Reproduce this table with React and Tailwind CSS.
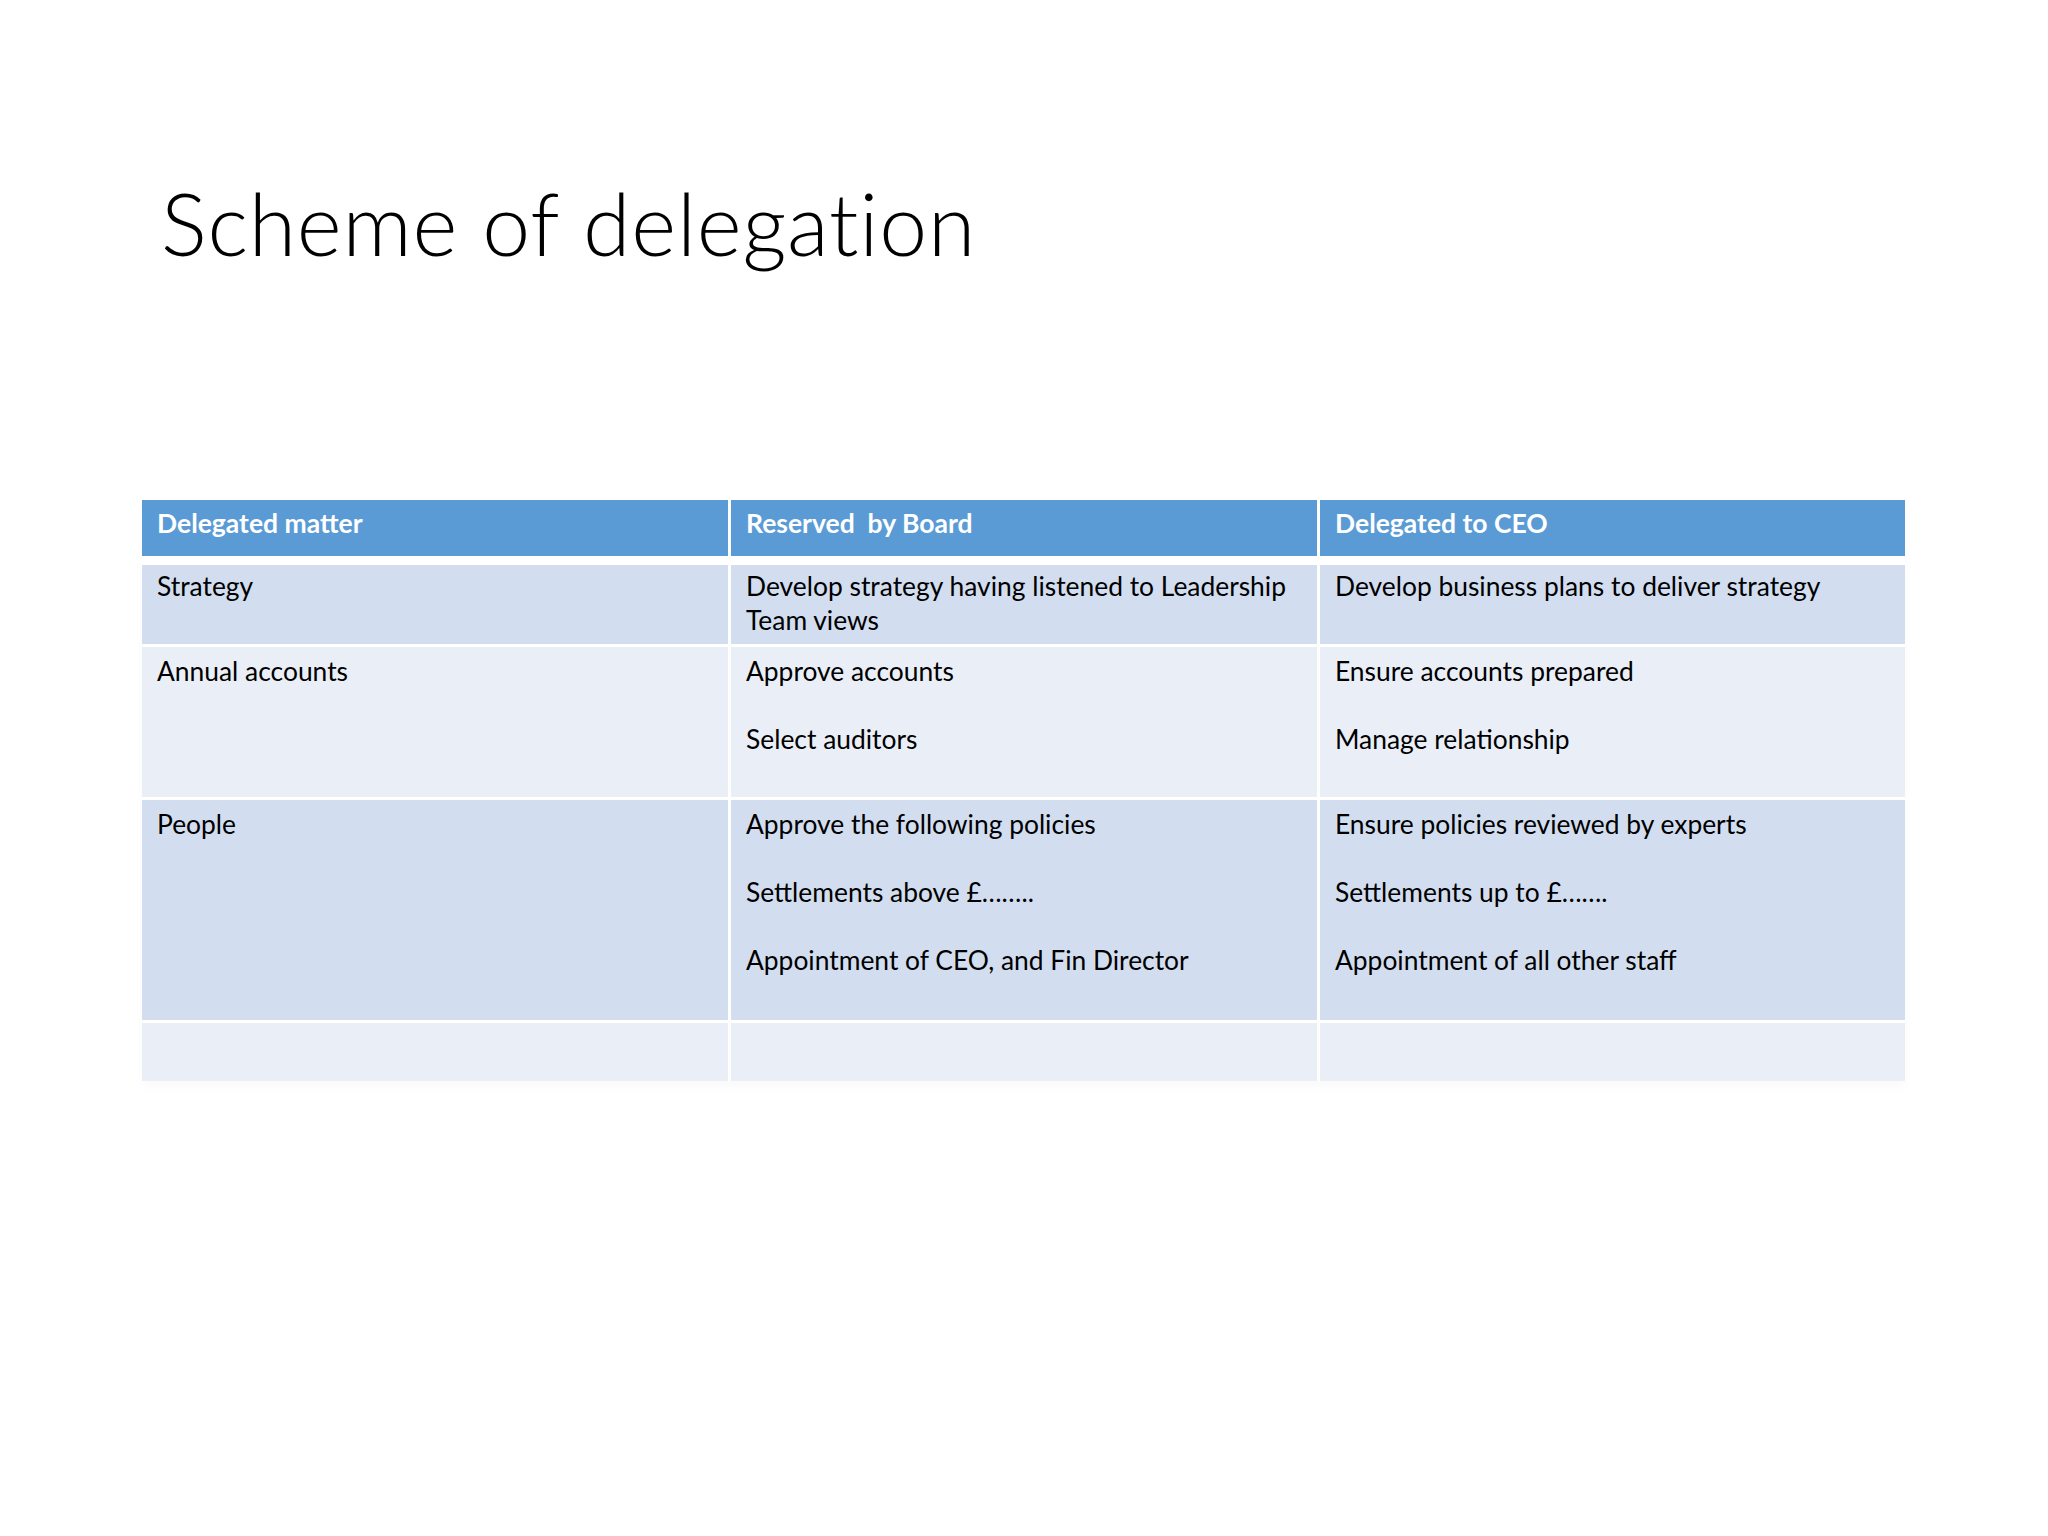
import React from "react";

const font = { fontFamily: "Lato, 'Open Sans', sans-serif" };

function Cell({ items, className = "" }) {
  return (
    <div className={`pl-[15px] pr-[10px] ${className}`}>
      {items.map((t, i) => (
        <div key={i} className={i > 0 ? "mt-[34px]" : ""}>
          {t}
        </div>
      ))}
    </div>
  );
}

export default function App() {
  const rows = [
    {
      h: "h-[79px]",
      pt: "pt-[4px]",
      bg: "bg-[#D2DEEF]",
      cells: [
        ["Strategy"],
        ["Develop strategy having listened to Leadership Team views"],
        ["Develop business plans to deliver strategy"],
      ],
    },
    {
      h: "h-[150px]",
      pt: "pt-[7px]",
      bg: "bg-[#EAEFF7]",
      cells: [
        ["Annual accounts"],
        ["Approve accounts", "Select auditors"],
        ["Ensure accounts prepared", "Manage relationship"],
      ],
    },
    {
      h: "h-[220px]",
      pt: "pt-[7px]",
      bg: "bg-[#D2DEEF]",
      cells: [
        ["People"],
        [
          "Approve the following policies",
          "Settlements above £……..",
          "Appointment of CEO, and Fin Director",
        ],
        [
          "Ensure policies reviewed by experts",
          "Settlements up to £…….",
          "Appointment of all other staff",
        ],
      ],
    },
    {
      h: "h-[58px]",
      pt: "pt-[7px]",
      bg: "bg-[#EAEEF7]",
      cells: [[""], [""], [""]],
    },
  ];

  return (
    <div className="w-[2048px] h-[1536px] bg-white overflow-hidden" style={font}>
      <div className="pl-[161px] pt-[175px]">
        <h1 className="text-[86px] leading-[96px] font-light text-black tracking-[0.8px]">
          Scheme of delegation
        </h1>
      </div>
      <div className="ml-[142px] mt-[229px] w-[1763px] flex flex-col shadow-[0_6px_10px_rgba(0,0,0,0.025)]">
        <div className="grid grid-cols-[586px_586px_585px] gap-x-[3px] h-[56px] mb-[9px] text-white font-bold text-[26.5px] leading-[34px]">
          {["Delegated matter", "Reserved  by Board", "Delegated to CEO"].map((t, i) => (
            <div key={i} className="bg-[#5B9BD5] pt-[6px] pl-[15px] whitespace-pre">
              {t}
            </div>
          ))}
        </div>
        <div className="flex flex-col gap-y-[3px]">
          {rows.map((r, ri) => (
            <div
              key={ri}
              className={`grid grid-cols-[586px_586px_585px] gap-x-[3px] ${r.h} text-[26.4px] leading-[34px] text-black`}
            >
              {r.cells.map((c, ci) => (
                <Cell key={ci} items={c} className={`${r.bg} ${r.pt}`} />
              ))}
            </div>
          ))}
        </div>
      </div>
    </div>
  );
}
